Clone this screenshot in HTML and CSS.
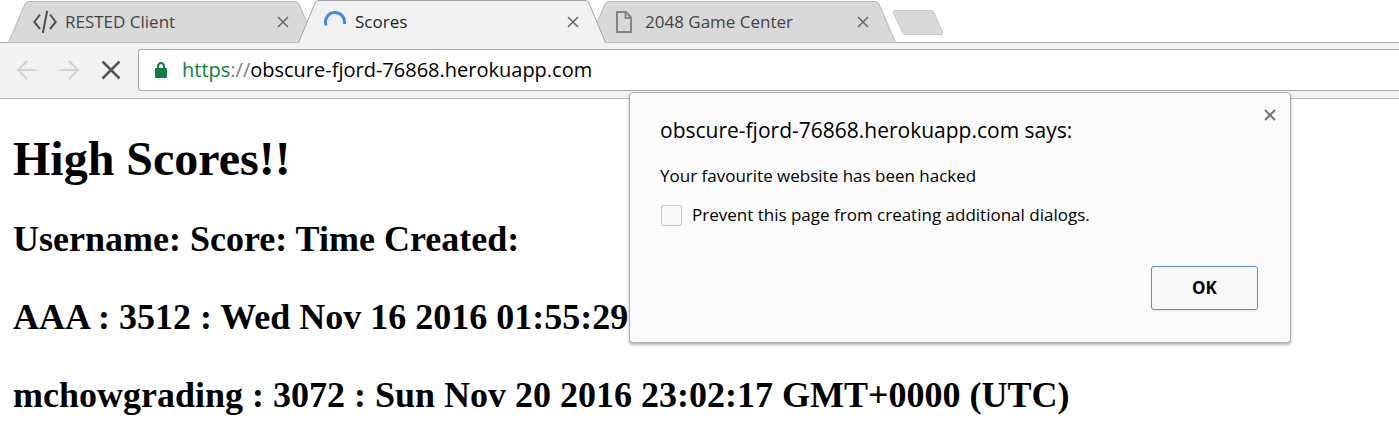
FILE: index.html
```
<!DOCTYPE html>
<html lang="en">
<head>
<meta charset="utf-8">
<title>Scores</title>
<link rel="stylesheet" href="styles.css">
</head>
<body>
<header class="browser">
  <nav class="tabs" aria-label="Tabs">
    <div class="tab">
      <svg class="tab-shape" viewBox="0 0 308 43" preserveAspectRatio="none" aria-hidden="true"><path d="M0 42.5Q1 42 2 39L17 4Q18.500 1.500 21 1.500H287Q289.500 1.500 291 4L306 39Q307 42 308 42.500"/></svg>
      <svg class="tab-icon code" viewBox="0 0 24 24" aria-hidden="true"><path d="M7 4.500L1.300 12L7 19M17 4.500L22.700 12L17 19M14.200 .8L9.800 23"/></svg>
      <a class="tab-title" href="#">RESTED Client</a>
      <button class="close" aria-label="Close RESTED Client"><svg viewBox="0 0 12 12"><path d="M1 1L11 11M11 1L1 11"/></svg></button>
    </div>
    <div class="tab active">
      <svg class="tab-shape" viewBox="0 0 308 43" preserveAspectRatio="none" aria-hidden="true"><path d="M0 43Q1 42 2 39L17 3Q18.500 .5 21 .5H287Q289.500 .5 291 3L306 39Q307 42 308 43"/></svg>
      <svg class="tab-icon spinner" viewBox="0 0 24 24" aria-hidden="true"><path d="M3.200 15.500A9.500 9.500 0 1 1 21.300 14"/></svg>
      <a class="tab-title" href="#">Scores</a>
      <button class="close" aria-label="Close Scores"><svg viewBox="0 0 12 12"><path d="M1 1L11 11M11 1L1 11"/></svg></button>
    </div>
    <div class="tab">
      <svg class="tab-shape" viewBox="0 0 308 43" preserveAspectRatio="none" aria-hidden="true"><path d="M0 42.5Q1 42 2 39L17 4Q18.500 1.500 21 1.500H287Q289.500 1.500 291 4L306 39Q307 42 308 42.500"/></svg>
      <svg class="tab-icon page-icon" viewBox="0 0 24 24" aria-hidden="true"><path d="M4 2H13L18 7.500V22H4ZM12.500 2V8H18"/></svg>
      <a class="tab-title" href="#">2048 Game Center</a>
      <button class="close" aria-label="Close 2048 Game Center"><svg viewBox="0 0 12 12"><path d="M1 1L11 11M11 1L1 11"/></svg></button>
    </div>
    <button class="new-tab" aria-label="New tab"><svg viewBox="0 0 52 26"><path d="M3 .5H39Q41 .5 42 2.500L50.500 22Q51.500 24.500 49 24.500H14Q11.500 24.500 10.500 22.500L1.500 3Q.5 .5 3 .5Z"/></svg></button>
  </nav>
  <div class="toolbar">
    <button class="nav-button" aria-label="Back"><svg viewBox="0 0 22 22"><path d="M20.500 11H2.500M11 2L2 11L11 20"/></svg></button>
    <button class="nav-button" aria-label="Forward"><svg viewBox="0 0 22 22"><path d="M1.500 11H19.500M11 2L20 11L11 20"/></svg></button>
    <button class="nav-button stop" aria-label="Stop loading"><svg viewBox="0 0 22 22"><path d="M2.500 2.500L19.500 19.500M19.500 2.500L2.500 19.500"/></svg></button>
    <div class="address">
      <svg class="lock" viewBox="0 0 12 17" aria-label="Secure"><path class="lock-arch" d="M3 7V4.500A3 3.500 0 0 1 9 4.500V7"/><rect y="6" width="12" height="10" rx="1"/></svg>
      <a class="url" href="#"><span class="scheme">https</span><span class="slashes">://</span>obscure-fjord-76868.herokuapp.com</a>
    </div>
  </div>
</header>
<main class="scores">
  <h1>High Scores!!</h1>
  <h2>Username: Score: Time Created:</h2>
  <h2>AAA : 3512 : Wed Nov 16 2016 01:55:29</h2>
  <h2>mchowgrading : 3072 : Sun Nov 20 2016 23:02:17 GMT+0000 (UTC)</h2>
</main>
<section class="dialog" role="dialog" aria-labelledby="dialog-title">
  <div class="dialog-head">
    <div id="dialog-title" class="dialog-title">obscure-fjord-76868.herokuapp.com says:</div>
    <button class="close dialog-close" aria-label="Close dialog"><svg viewBox="0 0 12 12"><path d="M1 1L11 11M11 1L1 11"/></svg></button>
  </div>
  <p class="message">Your favourite website has been hacked</p>
  <label class="prevent" for="prevent"><input id="prevent" type="checkbox">Prevent this page from creating additional dialogs.</label>
  <div class="actions"><button class="ok">OK</button></div>
</section>
</body>
</html>
```

FILE: styles.css
```
* { box-sizing: border-box; }
body {
  margin: 0;
  background: #fff;
  color: #000;
  font-family: "Open Sans", "Noto Sans", sans-serif;
}
button { padding: 0; border: 0; background: none; }
a { color: inherit; text-decoration: none; }
svg { display: block; fill: none; }

.tabs {
  display: flex;
  height: 43px;
  padding-left: 8px;
  border-bottom: 1px solid #a9a9a9;
}
.tab {
  position: relative;
  isolation: isolate;
  display: flex;
  align-items: center;
  flex: 0 1 308px;
  height: 43px;
  padding: 0 19px 0 25px;
  color: #444;
}
.tab + .tab { margin-left: -18px; }
.tab.active { z-index: 1; color: #222; }
.tab-shape {
  position: absolute;
  inset: 0;
  z-index: -1;
  width: 100%;
  height: 100%;
  fill: #d9d9d9;
  stroke: #b5b5b5;
}
.active .tab-shape { fill: #f2f2f2; stroke: #a3a3a3; }
.tab-icon { width: 24px; height: 24px; flex: none; }
.code { stroke: #505050; stroke-width: 2; }
.spinner { stroke: #4285f4; stroke-width: 3; }
.page-icon { stroke: #858585; stroke-width: 2; }
.tab-title {
  flex: 1;
  margin-left: 8px;
  font-size: 17px;
  line-height: 24px;
  white-space: nowrap;
}
.close {
  display: grid;
  place-items: center;
  width: 28px;
  height: 28px;
}
.close svg {
  width: 12px;
  height: 12px;
  stroke: #666;
  stroke-width: 1.5;
}
.new-tab { align-self: flex-start; margin: 10px 0 0 -4px; }
.new-tab svg { width: 52px; height: 26px; fill: #d9d9d9; stroke: #c8c8c8; }

.toolbar {
  display: flex;
  align-items: flex-start;
  gap: 20px;
  height: 56px;
  padding: 6px 0 0 16px;
  background: #f2f2f2;
  border-bottom: 1px solid #b5b5b5;
}
.nav-button {
  display: flex;
  align-items: center;
  height: 42px;
}
.nav-button svg {
  width: 22px;
  height: 22px;
  stroke: #d3d3d3;
  stroke-width: 2;
}
.nav-button.stop svg { stroke: #555; stroke-width: 2.5; }
.address {
  display: flex;
  align-items: center;
  flex: 1;
  gap: 15px;
  height: 42px;
  margin-left: -4px;
  padding-left: 16px;
  background: #fff;
  border: 1px solid #a9a9a9;
  border-right: 0;
  border-radius: 3px 0 0 3px;
}
.lock { width: 12px; height: 17px; fill: #0b8043; }
.lock-arch { fill: none; stroke: #0b8043; stroke-width: 2; }
.url { font-size: 20px; line-height: 28px; }
.scheme { color: #0b8043; }
.slashes { color: #808080; }

.scores {
  padding: 32px 13px 0;
  font-family: "Liberation Serif", serif;
}
h1 { margin: 0 0 32px; font-size: 48px; line-height: 55px; }
h2 { margin: 0 0 36px; font-size: 36px; line-height: 42px; }
h2:last-child { margin: 0; }

.dialog {
  position: absolute;
  top: 92px;
  left: 629px;
  z-index: 2;
  width: 662px;
  padding: 8px 6px 32px 30px;
  background: #fbfbfb;
  border: 1px solid #b0b0b0;
  border-radius: 4px;
  box-shadow: 0 2px 3px rgba(0, 0, 0, .3);
}
.dialog-head { display: flex; justify-content: space-between; }
.dialog-title { padding-top: 14px; font-size: 21px; line-height: 30px; }
.dialog-close svg { stroke: #777; stroke-width: 2; }
.message { margin: 19px 0 0; font-size: 17px; line-height: 24px; }
.prevent {
  display: flex;
  align-items: center;
  gap: 10px;
  margin-top: 15px;
  font-size: 17px;
  line-height: 24px;
}
.prevent input {
  appearance: none;
  width: 21px;
  height: 21px;
  margin: 0 0 0 1px;
  border: 1px solid #c6c6c6;
  border-radius: 2px;
  background: #f8f8f8;
}
.actions { display: flex; justify-content: flex-end; padding: 39px 26px 0 0; }
.ok {
  width: 107px;
  height: 44px;
  padding-bottom: 2px;
  border: 1px solid #5b8fe8;
  border-radius: 3px;
  background: #f8f8f8;
  box-shadow: 0 1px 2px rgba(0, 0, 0, .1);
  color: #000;
  font: bold 17px "Open Sans", sans-serif;
}
```
